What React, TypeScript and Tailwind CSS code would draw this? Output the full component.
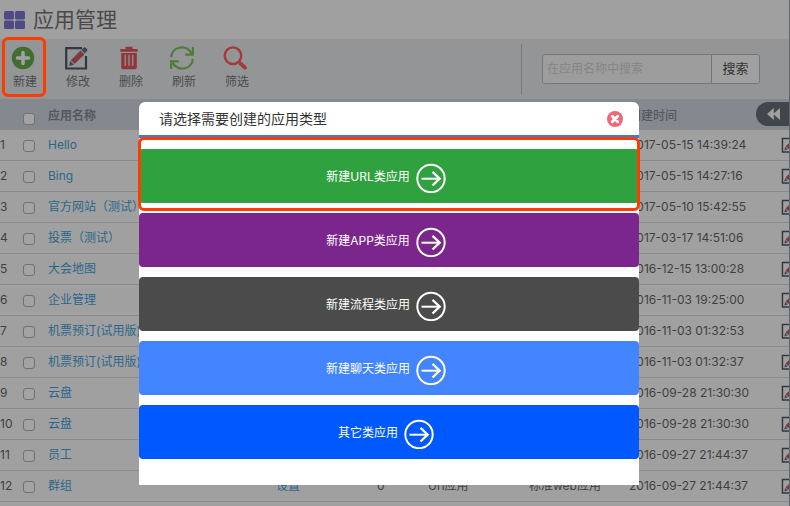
import React from "react";

type Row = {
  name: string;
  created: string;
  settings?: string;
  count?: string;
  kind?: string;
  template?: string;
};

const rows: Row[] = [
  { name: "Hello", created: "2017-05-15 14:39:24" },
  { name: "Bing", created: "2017-05-15 14:27:16" },
  { name: "官方网站（测试）", created: "2017-05-10 15:42:55" },
  { name: "投票（测试）", created: "2017-03-17 14:51:06" },
  { name: "大会地图", created: "2016-12-15 13:00:28" },
  { name: "企业管理", created: "2016-11-03 19:25:00" },
  { name: "机票预订(试用版)", created: "2016-11-03 01:32:53" },
  { name: "机票预订(试用版)", created: "2016-11-03 01:32:37" },
  { name: "云盘", created: "2016-09-28 21:30:30" },
  { name: "云盘", created: "2016-09-28 21:30:30" },
  { name: "员工", created: "2016-09-27 21:44:37" },
  {
    name: "群组",
    created: "2016-09-27 21:44:37",
    settings: "设置",
    count: "0",
    kind: "Url应用",
    template: "标准web应用",
  },
];

const choices = [
  { label: "新建URL类应用", color: "bg-[#2fa13e]" },
  { label: "新建APP类应用", color: "bg-[#7b268d]" },
  { label: "新建流程类应用", color: "bg-[#4b4b4b]" },
  { label: "新建聊天类应用", color: "bg-[#4285ff]" },
  { label: "其它类应用", color: "bg-[#0059ff]" },
];

function EditIcon({ className = "" }: { className?: string }) {
  return (
    <svg viewBox="0 0 24 24" className={className} aria-hidden="true">
      <path d="M22 10v12.5H2.2V2.2H18" fill="none" stroke="#33383f" strokeWidth="2.2" />
      <path d="M6.8 14.2 16.5 4.500l3.900 3.900-9.700 9.700z" fill="#80393c" />
      <path d="m6.200 14.900 3.800 3.800-5 1.400z" fill="#3c4758" />
      <path d="m17.400 4.100 2.300-2.600q1-.7 2 .2l1.300 1.300q.9 1 0 2l-2.300 2.400z" fill="#3c4758" />
    </svg>
  );
}

function PlusIcon() {
  return (
    <svg viewBox="0 0 24 24" className="size-6" aria-hidden="true">
      <circle cx="12" cy="12" r="11.2" fill="#436c31" />
      <path d="M12 6.5v11M6.500 12h11" stroke="#a0a2a0" strokeWidth="3.600" strokeLinecap="round" />
    </svg>
  );
}

function TrashIcon() {
  return (
    <svg viewBox="0 0 24 24" className="size-6" aria-hidden="true">
      <path d="M8.500 3V.8h7V3H20q.8 0 .8.8v2H3.200v-2Q3.200 3 4 3z" fill="#91373c" />
      <path d="M4.200 6.900h15.600V21.500q0 1.700-1.700 1.700H5.900q-1.700 0-1.700-1.700z" fill="#91373c" />
      <path d="M8.300 8.700v11M12 8.700v11M15.700 8.700v11" stroke="#8f8b8c" strokeWidth="1.500" />
    </svg>
  );
}

function RefreshIcon() {
  return (
    <svg viewBox="0 0 24 24" className="size-6" fill="none" stroke="#4f7c38" strokeWidth="2.200" aria-hidden="true">
      <path d="M1.300 11.300C1.300 1 15.500-2.600 21.600 7.300" />
      <path d="M22.900 1v7.600h-7.700" />
      <path d="M22.700 12.700c0 10.300-14.200 13.900-20.300 4" />
      <path d="M1.100 23v-7.600h7.700" />
    </svg>
  );
}

function SearchIcon() {
  return (
    <svg viewBox="0 0 24 24" className="size-6" fill="none" stroke="#a33a3d" aria-hidden="true">
      <circle cx="10" cy="9.700" r="8.300" strokeWidth="2.400" />
      <path d="m15.800 15.500 2.100 2.100" strokeWidth="2.500" />
      <path d="m17.900 17.900 4 3.700" strokeWidth="4" strokeLinecap="round" />
    </svg>
  );
}

const tools = [
  { label: "新建", icon: <PlusIcon />, marked: true },
  { label: "修改", icon: <EditIcon className="size-6" /> },
  { label: "删除", icon: <TrashIcon /> },
  { label: "刷新", icon: <RefreshIcon /> },
  { label: "筛选", icon: <SearchIcon /> },
];

function Tick({ label }: { label: string }) {
  return (
    <input
      type="checkbox"
      aria-label={label}
      className="block size-3 appearance-none rounded-[3px] border border-[#717171] bg-[#a3a3a3]"
    />
  );
}

function Marker({ className }: { className: string }) {
  return <span className={`pointer-events-none absolute rounded-md border-3 border-[#ff3c00] ${className}`} />;
}

function TypeDialog() {
  return (
    <div className="fixed inset-0 flex items-start justify-center pt-[102px] pr-3">
      <section
        role="dialog"
        aria-labelledby="dialog-title"
        className="w-[500px] rounded-t-md bg-white pb-[26px]"
      >
        <header className="flex items-center justify-between border-b-3 border-[#3f7bd0] pt-px pr-4 pl-5">
          <h2 id="dialog-title" className="text-sm leading-8 text-[#333333]">
            请选择需要创建的应用类型
          </h2>
          <button type="button" aria-label="关闭">
            <svg viewBox="0 0 16 16" className="block size-4">
              <circle cx="8" cy="8" r="8" fill="#ee6877" />
              <path d="m5.300 5.300 5.400 5.400M10.700 5.300l-5.400 5.400" stroke="white" strokeWidth="3" strokeLinecap="round" />
            </svg>
          </button>
        </header>
        <div className="relative mt-[11px] flex flex-col gap-2.5">
          {choices.map((choice) => (
            <button
              key={choice.label}
              type="button"
              className={`flex h-[54px] items-center justify-center gap-1.5 rounded pt-1 pr-1.5 text-xs text-white ${choice.color}`}
            >
              <span className="pb-0.5">{choice.label}</span>
              <svg
                viewBox="0 0 30 30"
                className="size-[30px]"
                fill="none"
                stroke="white"
                strokeWidth="2"
                aria-hidden="true"
              >
                <circle cx="15" cy="15.500" r="13.700" />
                <path d="M5.500 15.700H24" />
                <path d="m16.500 8.900 7.200 6.800-7.200 6.800" strokeWidth="2.300" />
              </svg>
            </button>
          ))}
          <Marker className="-inset-x-px -top-3 h-[74px]" />
        </div>
      </section>
    </div>
  );
}

export default function App() {
  return (
    <div className="relative h-screen overflow-hidden border-r border-[#5d6672] bg-[#a0a0a0] font-['Inter','Noto_Sans_CJK_SC',sans-serif] text-xs text-[#404040]">
      <header className="flex h-[39px] items-center gap-2 pl-1">
        <svg viewBox="0 0 21 18" className="h-[18px] w-[21px]" fill="#4e4b84" aria-hidden="true">
          <rect width="10" height="8.500" rx="1.500" />
          <rect x="11" width="10" height="8.500" rx="1.500" />
          <rect y="9.500" width="10" height="8.500" rx="1.500" />
          <rect x="11" y="9.500" width="10" height="8.500" rx="1.500" />
        </svg>
        <h1 className="text-[21px] leading-8 text-[#4a4a4a]">应用管理</h1>
      </header>

      <div className="flex h-[60px] items-center justify-between bg-[#939597] pr-[29px] pl-[11px]">
        <nav className="flex">
          {tools.map((tool) => (
            <button
              key={tool.label}
              type="button"
              className="relative flex w-[53px] flex-col items-start gap-1 pb-0.5 text-[#4a4c4e]"
            >
              {tool.icon}
              <span className="pl-0.5">{tool.label}</span>
              {tool.marked && <Marker className="-top-[9px] -left-[9px] h-[60px] w-11" />}
            </button>
          ))}
        </nav>
        <div className="flex h-[50px] items-center border-l border-[#77797b] pl-5">
          <form className="flex h-[30px] w-[218px] overflow-hidden rounded-[3px] border border-[#74777a]">
            <input
              type="text"
              aria-label="在应用名称中搜索"
              placeholder="在应用名称中搜索"
              className="min-w-0 flex-1 bg-[#9d9d9d] px-1 placeholder:text-[#858585]"
            />
            <button type="button" className="w-12 border-l border-[#74777a] bg-[#a0a0a0] text-[13px] text-[#333333]">
              搜索
            </button>
          </form>
        </div>
      </div>

      <div className="relative">
        <table className="w-full table-fixed border-separate border-spacing-0 text-left">
          <colgroup>
            <col className="w-[18px]" />
            <col className="w-[30px]" />
            <col className="w-[228px]" />
            <col className="w-[101px]" />
            <col className="w-[51px]" />
            <col className="w-[101px]" />
            <col className="w-[100px]" />
            <col />
            <col className="w-2" />
          </colgroup>
          <thead>
            <tr className="h-[31px] bg-[#848990] text-[#55585c]">
              <th />
              <th className="pt-2 pl-[5px]">
                <Tick label="全选" />
              </th>
              <th className="pt-0.5 font-bold">应用名称</th>
              <th colSpan={4} />
              <th className="pt-0.5 font-medium">创建时间</th>
              <th />
            </tr>
          </thead>
          <tbody>
            {rows.map((row, index) => (
              <tr key={index} className="h-[31px] whitespace-nowrap *:border-b *:border-[#8b8b8b]">
                <td>{index + 1}</td>
                <td className="pt-0.5 pl-[5px]">
                  <Tick label={row.name} />
                </td>
                <td>
                  <a href="#" className="text-[#2b678a]">
                    {row.name}
                  </a>
                </td>
                <td>
                  {row.settings && (
                    <a href="#" className="text-[#2b678a]">
                      {row.settings}
                    </a>
                  )}
                </td>
                <td>{row.count}</td>
                <td>{row.kind}</td>
                <td>{row.template}</td>
                <td>{row.created}</td>
                <td>
                  <button type="button" aria-label="修改" className="block w-2 overflow-hidden">
                    <EditIcon className="size-4 max-w-none" />
                  </button>
                </td>
              </tr>
            ))}
          </tbody>
        </table>
        <button
          type="button"
          aria-label="展开"
          className="absolute top-[3px] right-0 flex h-6 w-[33px] items-center rounded-l-full bg-[#42464c] pl-[11px]"
        >
          <svg viewBox="0 0 13 12" className="h-3 w-[13px]" fill="#a0a0a0" aria-hidden="true">
            <path d="M6.800 0v12L0 6zM13 0v12L6.200 6z" />
          </svg>
        </button>
      </div>

      <TypeDialog />
    </div>
  );
}
